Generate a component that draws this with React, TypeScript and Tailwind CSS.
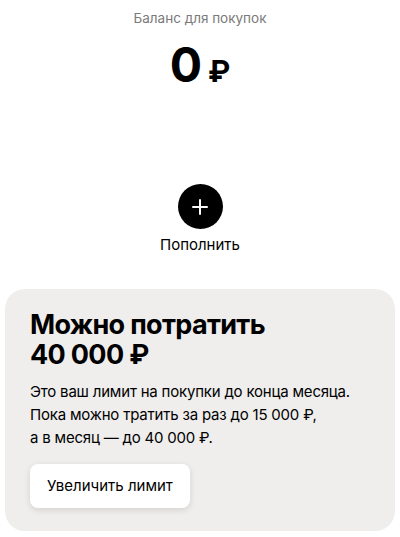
import { Plus } from 'lucide-react';

const App = () => {
    return (
        <div className="w-[400px] h-[537px] bg-white overflow-hidden text-black" style={{ fontFamily: 'Inter, "Noto Sans", sans-serif' }}>
            {/* Balance */}
            <div className="flex flex-col items-center pt-[9px]">
                <div className="text-[13.5px] leading-[18px] text-[#7a7a7a]">Баланс для покупок</div>
                <div className="mt-[14px] flex items-baseline gap-[7px] font-bold">
                    <span className="text-[48px] leading-[48px] tracking-tight">0</span>
                    <span className="text-[30px] leading-[30px]">₽</span>
                </div>
            </div>

            {/* Top up */}
            <div className="flex flex-col items-center mt-[95px]">
                <button className="w-[45px] h-[45px] rounded-full bg-black flex items-center justify-center">
                    <Plus size={24} strokeWidth={2} color="white" />
                </button>
                <div className="mt-[6px] text-[15px] leading-[20px]">Пополнить</div>
            </div>

            {/* Limit card */}
            <div className="mx-[5px] mt-[34px] h-[242px] rounded-[20px] bg-[#efeeed] px-[25px] pt-[21px]">
                <div className="text-[27px] leading-[30px] font-bold tracking-tight">
                    Можно потратить
                    <br />
                    40 000 ₽
                </div>
                <div className="mt-[10px] text-[15px] leading-[23px] tracking-[-0.2px]">
                    Это ваш лимит на покупки до конца месяца.
                    <br />
                    Пока можно тратить за раз до 15 000 ₽,
                    <br />
                    а в месяц — до 40 000 ₽.
                </div>
                <button className="mt-[15px] h-[44px] px-[17px] rounded-[8px] bg-white shadow-[0_2px_6px_rgba(0,0,0,0.12)] text-[15px]">
                    Увеличить лимит
                </button>
            </div>
        </div>
    );
};

export default App;
